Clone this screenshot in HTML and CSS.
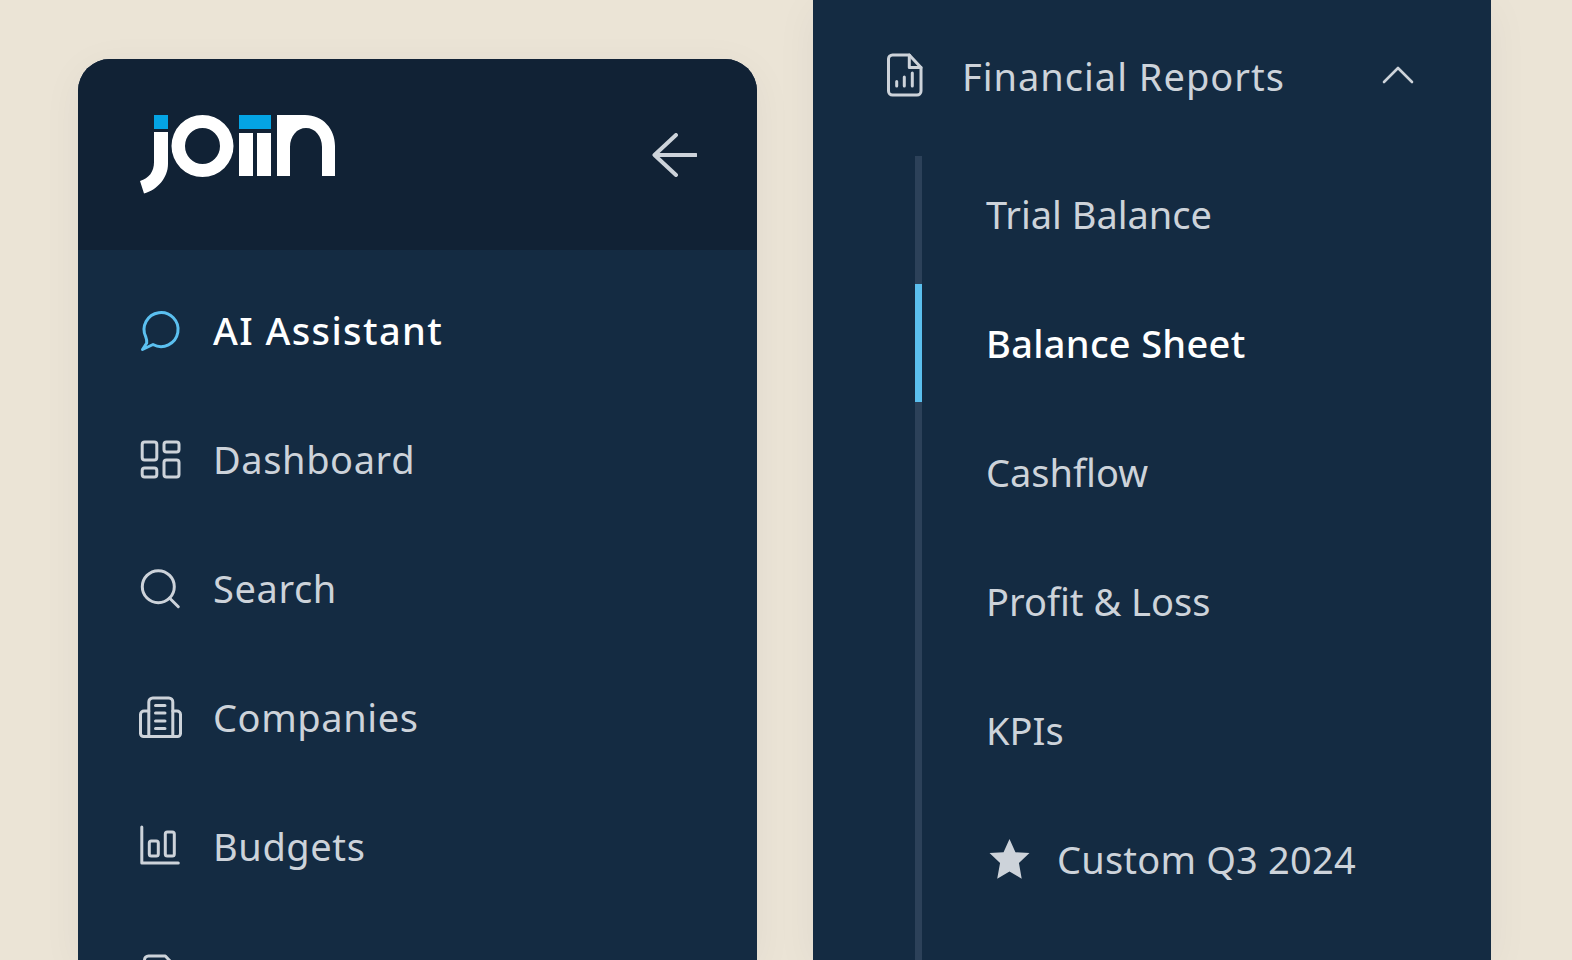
FILE: index.html
```html
<!DOCTYPE html>
<html lang="en">
<head>
    <meta charset="UTF-8">
    <title>Join sidebar</title>
    <link rel="stylesheet" href="styles.css">
</head>
<body>
    <div class="page">
        <aside class="panel panel-main">
            <div class="brand">
                <svg class="logo" width="196" height="80" viewBox="140 115 196 80">
                    <rect class="logo-blue" x="154" y="115" width="14" height="14"/>
                    <rect class="logo-blue" x="239" y="115" width="32" height="14"/>
                    <path class="logo-white" d="M154 132H168V164C168 178 157 190 144 193.500L140 181C149 178 154 172 154 162Z"/>
                    <path class="logo-white" fill-rule="evenodd" d="M202.500 115A31 31 0 1 1 202.500 177A31 31 0 1 1 202.500 115ZM202.500 128A17.500 18 0 1 0 202.500 164A17.500 18 0 1 0 202.500 128Z"/>
                    <rect class="logo-white" x="239" y="133" width="14" height="43"/>
                    <rect class="logo-white" x="257" y="133" width="14" height="43"/>
                    <path class="logo-white" d="M277 115H305C323 115 335 129 335 146V176H322V147C322 136 315 128 306 128C297 128 290 136 290 147V176H277Z"/>
                </svg>
                <svg class="back" width="46" height="44" viewBox="0 0 46 44">
                    <path d="M25 2L3.500 22L25 42M3.500 22H45"/>
                </svg>
            </div>
            <nav class="nav">
                <a class="nav-item active">
                    <svg class="icon" viewBox="0 0 40 40"><path d="M13 33.500A17 17 0 1 0 5.800 26Q7 29 6.700 32L2.500 38.500Z"/></svg>
                    <span>AI Assistant</span>
                </a>
                <a class="nav-item">
                    <svg class="icon" viewBox="0 0 40 40">
                        <rect x="2.200" y="2" width="14.600" height="18" rx="2.500"/>
                        <rect x="24" y="2" width="15" height="10" rx="2.500"/>
                        <rect x="2.200" y="28" width="14.600" height="9" rx="2.500"/>
                        <rect x="24" y="20" width="15" height="17" rx="2.500"/>
                    </svg>
                    <span>Dashboard</span>
                </a>
                <a class="nav-item">
                    <svg class="icon" viewBox="0 0 40 40"><circle cx="18.300" cy="17.700" r="16"/><path d="M29.500 29L38.300 37.700"/></svg>
                    <span>Search</span>
                </a>
                <a class="nav-item">
                    <svg class="icon" viewBox="0 0 40 40">
                        <path d="M8.800 38V4A4 4 0 0 1 12.800 0H28.800A4 4 0 0 1 32.800 4V38"/>
                        <path d="M8.800 13H4A3.500 3.500 0 0 0 .5 16.500V35.500A3 3 0 0 0 3.500 38.500H37.500A3 3 0 0 0 40.500 35.500V16.500A3.500 3.500 0 0 0 37 13H32.800"/>
                        <path d="M15.500 7.500H25M15.500 15H25M15.500 23H25M15.500 30.500H25"/>
                    </svg>
                    <span>Companies</span>
                </a>
                <a class="nav-item">
                    <svg class="icon" viewBox="0 0 40 40">
                        <path d="M1.800 0V36H38.300"/>
                        <rect x="9.300" y="14" width="9" height="15" rx="2"/>
                        <rect x="25.300" y="5" width="9" height="24" rx="2"/>
                    </svg>
                    <span>Budgets</span>
                </a>
                <a class="nav-item">
                    <svg class="icon doc-next" viewBox="0 0 40 42">
                        <path d="M4.500 5A4 4 0 0 1 8.500 1H25.300L37 13.500V37A4 4 0 0 1 33 41H8.500A4 4 0 0 1 4.500 37Z"/>
                    </svg>
                </a>
            </nav>
        </aside>

        <aside class="panel panel-sub">
            <div class="group-head">
                <svg class="icon doc" viewBox="0 0 40 42">
                    <path d="M4.500 5A4 4 0 0 1 8.500 1H25.300L37 13.500V37A4 4 0 0 1 33 41H8.500A4 4 0 0 1 4.500 37Z"/>
                    <path d="M25.300 1V13.500H37"/>
                    <path d="M12.700 27.500V32M20.300 23V32M28.300 19V32"/>
                </svg>
                <span class="group-title">Financial Reports</span>
                <svg class="chevron" width="32" height="18" viewBox="0 0 32 18"><path d="M2 16L16 2L30 16"/></svg>
            </div>
            <ul class="sub-list">
                <li class="sub-item">Trial Balance</li>
                <li class="sub-item current">Balance Sheet</li>
                <li class="sub-item">Cashflow</li>
                <li class="sub-item">Profit &amp; Loss</li>
                <li class="sub-item">KPIs</li>
                <li class="sub-item">
                    <svg class="star" width="41" height="40" viewBox="0 0 40 38" preserveAspectRatio="none"><path d="M20 0L25.800 12.600L39.500 13.400L29.200 22.900L31.900 37.800L20 30.800L8 37.800L10.800 22.900L.5 13.400L14.200 12.600Z"/></svg>
                    <span class="custom-label">Custom Q3 2024</span>
                </li>
            </ul>
        </aside>
    </div>
</body>
</html>
```

FILE: styles.css
```css
* {
    margin: 0;
    padding: 0;
    box-sizing: border-box;
}

html, body {
    height: 960px;
    overflow: hidden;
}

body {
    background-color: #ebe4d6;
    font-family: "Noto Sans", "Open Sans", sans-serif;
    font-size: 38px;
    color: #cdd3da;
}

ul {
    list-style: none;
}

.page {
    display: flex;
    gap: 56px;
    padding-left: 78px;
    height: 960px;
}

.panel {
    width: 679px;
    background-color: #142b42;
    overflow: hidden;
}

.panel-main {
    margin-top: 59px;
    border-radius: 32px 32px 0 0;
    box-shadow: 0 8px 40px rgba(23, 44, 69, 0.05);
}

.panel-sub {
    width: 678px;
    box-shadow: 0 8px 40px rgba(23, 44, 69, 0.05);
}

/* brand bar */
.brand {
    display: flex;
    align-items: center;
    justify-content: space-between;
    height: 191px;
    padding: 0 60px 0 62px;
    background-color: #112235;
}

.logo-blue {
    fill: #04a4e4;
}

.logo-white {
    fill: #fff;
}

.back path,
.icon,
.chevron path {
    fill: none;
    stroke: #cdd3da;
    stroke-width: 3;
    stroke-linecap: round;
    stroke-linejoin: round;
}

.back path {
    stroke-width: 4;
}

.icon {
    width: 40px;
    height: 40px;
    flex: none;
    overflow: visible;
}

/* main nav */
.nav {
    padding-top: 16px;
}

.nav-item {
    display: flex;
    align-items: center;
    gap: 33px;
    height: 129px;
    padding-left: 62px;
    letter-spacing: 0.6px;
}

.nav-item span {
    margin-bottom: 2px;
}

.nav-item.active {
    color: #fff;
    font-weight: 500;
    letter-spacing: 1.4px;
}

.nav-item.active .icon {
    stroke: #5bc0f0;
}

.doc-next {
    height: 42px;
}

/* financial reports group */
.group-head {
    display: flex;
    align-items: center;
    height: 129px;
    margin-top: 11px;
    padding: 0 77px 0 71px;
}

.doc {
    height: 42px;
    margin-right: 38px;
    transform: translateY(-1px);
}

.group-title {
    flex: 1;
    letter-spacing: 1px;
}

.chevron {
    margin-bottom: 2px;
}

.chevron path {
    stroke-width: 2.600;
}

.sub-list {
    position: relative;
    margin: 10px 0 0 102px;
    padding-bottom: 80px;
}

.sub-list::before {
    content: "";
    position: absolute;
    left: 0;
    top: 6px;
    bottom: 0;
    width: 7px;
    background-color: #2c4159;
}

.sub-item {
    display: flex;
    align-items: center;
    gap: 27px;
    height: 129px;
    padding: 0 0 2px 71px;
}

.sub-item.current {
    position: relative;
    color: #fff;
    font-weight: 500;
    letter-spacing: 0.3px;
}

.sub-item.current::before {
    content: "";
    position: absolute;
    left: 0;
    top: 5px;
    bottom: 6px;
    width: 7px;
    background-color: #5bbfee;
}

.star {
    margin-left: 3px;
    flex: none;
}

.star path {
    fill: #cdd3da;
}

.custom-label {
    letter-spacing: 0.2px;
}
```
